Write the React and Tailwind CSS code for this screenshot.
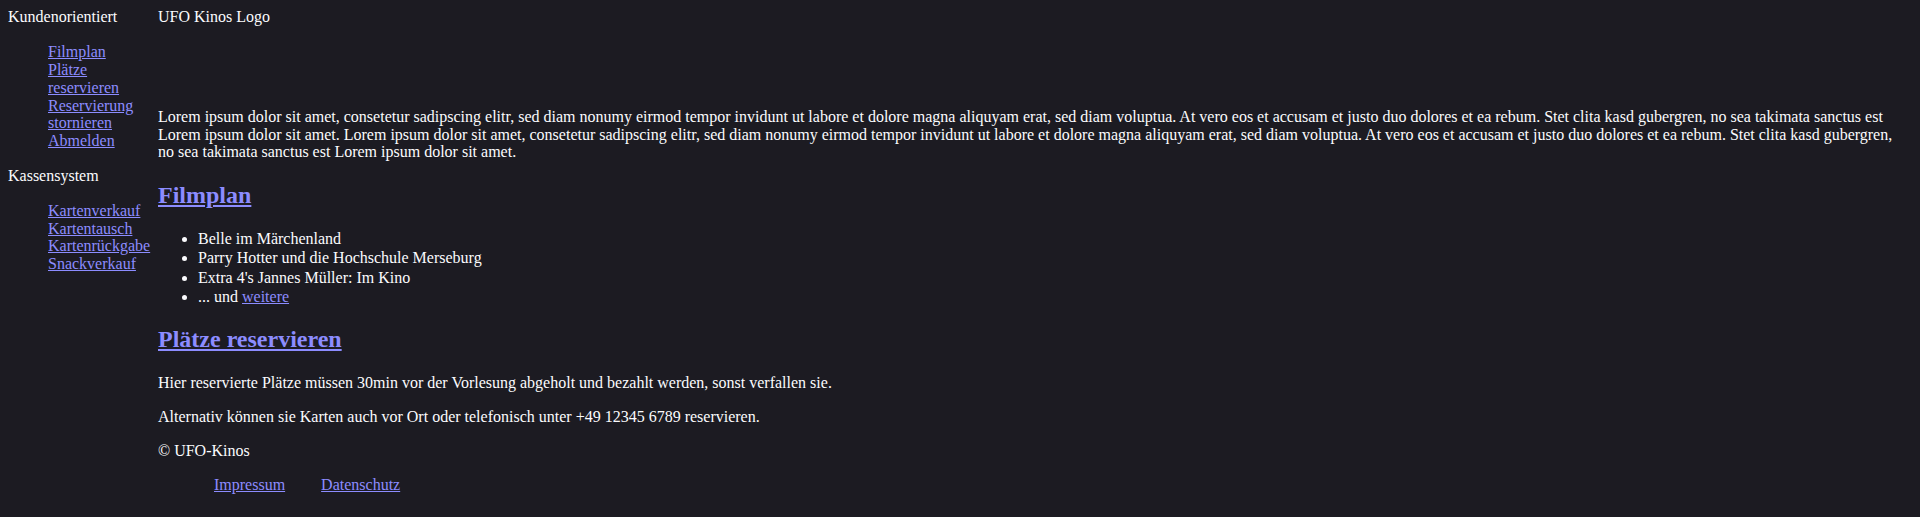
import React from "react";

const sidebar = [
  {
    title: "Kundenorientiert",
    links: ["Filmplan", "Plätze reservieren", "Reservierung stornieren", "Abmelden"],
  },
  {
    title: "Kassensystem",
    links: ["Kartenverkauf", "Kartentausch", "Kartenrückgabe", "Snackverkauf"],
  },
];

const films = [
  "Belle im Märchenland",
  "Parry Hotter und die Hochschule Merseburg",
  "Extra 4's Jannes Müller: Im Kino",
];

const lorem =
  "Lorem ipsum dolor sit amet, consetetur sadipscing elitr, sed diam nonumy eirmod tempor invidunt ut labore et dolore magna aliquyam erat, sed diam voluptua. At vero eos et accusam et justo duo dolores et ea rebum. Stet clita kasd gubergren, no sea takimata sanctus est Lorem ipsum dolor sit amet. Lorem ipsum dolor sit amet, consetetur sadipscing elitr, sed diam nonumy eirmod tempor invidunt ut labore et dolore magna aliquyam erat, sed diam voluptua. At vero eos et accusam et justo duo dolores et ea rebum. Stet clita kasd gubergren, no sea takimata sanctus est Lorem ipsum dolor sit amet.";

const linkCls = "text-[#8c8cff] underline";

export default function App() {
  return (
    <div className="min-h-screen bg-[#1c1b22] p-2 font-['Liberation_Serif',serif] text-base text-[#fbfbfe]">
      <div className="flex">
        {/* sidebar nav */}
        <nav className="w-[142px] shrink-0">
          {sidebar.map((group, i) => (
            <div key={group.title} className={i === 0 ? "" : "mt-[17px]"}>
              <div className="leading-[18.4px]">{group.title}</div>
              <ul className="mt-[17px] pl-10 leading-[17.7px]">
                {group.links.map((l) => (
                  <li key={l}>
                    <a href="#" className={linkCls}>
                      {l}
                    </a>
                  </li>
                ))}
              </ul>
            </div>
          ))}
        </nav>

        {/* main */}
        <main className="ml-2 mr-[14px] flex-1">
          <header className="h-[100px] leading-[18.4px]">UFO Kinos Logo</header>

          <p className="leading-[17.7px]">{lorem}</p>

          <h2 className="mt-[21px] text-2xl font-bold leading-[27px]">
            <a href="#" className={linkCls}>
              Filmplan
            </a>
          </h2>

          <ul className="mt-5 list-disc pl-10 leading-[19.2px]">
            {films.map((f) => (
              <li key={f}>{f}</li>
            ))}
            <li>
              ... und{" "}
              <a href="#" className={linkCls}>
                weitere
              </a>
            </li>
          </ul>

          <h2 className="mt-5 text-2xl font-bold leading-[27px]">
            <a href="#" className={linkCls}>
              Plätze reservieren
            </a>
          </h2>

          <p className="mt-[21px] leading-[18.4px]">
            Hier reservierte Plätze müssen 30min vor der Vorlesung abgeholt und bezahlt werden, sonst verfallen sie.
          </p>
          <p className="mt-4 leading-[18.4px]">
            Alternativ können sie Karten auch vor Ort oder telefonisch unter +49 12345 6789 reservieren.
          </p>

          <footer className="mt-[15px]">
            <p className="leading-[18.4px]">© UFO-Kinos</p>
            <ul className="mt-4 flex gap-9 pl-14 leading-[18.4px]">
              <li>
                <a href="#" className={linkCls}>
                  Impressum
                </a>
              </li>
              <li>
                <a href="#" className={linkCls}>
                  Datenschutz
                </a>
              </li>
            </ul>
          </footer>
        </main>
      </div>
    </div>
  );
}
